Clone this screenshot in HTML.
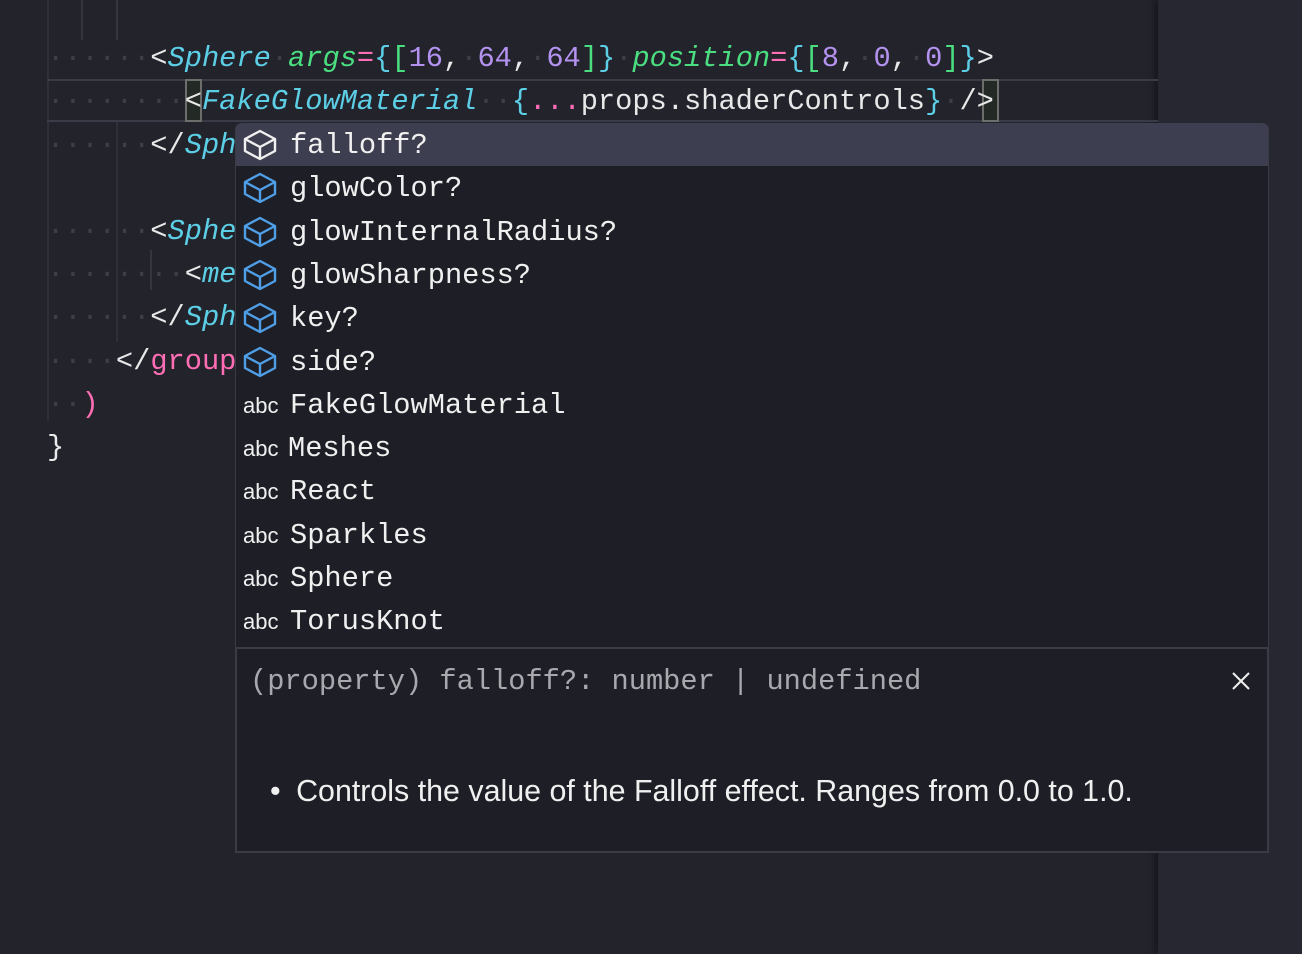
<!DOCTYPE html>
<html><head><meta charset="utf-8"><style>
*{margin:0;padding:0;box-sizing:border-box}
body{width:1302px;height:954px;background:#23232c;position:relative;overflow:hidden;font-family:"Liberation Mono",monospace}
.right{position:absolute;left:1158px;top:0;width:144px;height:954px;background:#262731;box-shadow:-4px 0 6px rgba(0,0,0,.35)}
.guide{position:absolute;top:0;width:2px;background:#34353f}
.ln{position:absolute;left:47px;height:43px;line-height:43px;font-size:28.7px;color:#e8e8e8;white-space:pre}
.d{color:#3d3e48}
.t{color:#5ccfe6;font-style:italic}
.a{color:#4ade80;font-style:italic}
.p{color:#ff6eb4}
.c{color:#5ccfe6}
.g{color:#4ade80}
.n{color:#b392f0}
.cur{position:absolute;left:47px;top:79px;width:1111px;height:43px;border:2px solid #3a3b47;border-left:none;border-right:none}
.cbox{position:absolute;width:17px;height:43px;border:2px solid #6b6e6b;background:#232a26}
.sugg{position:absolute;left:235px;top:123px;width:1034px;height:525px;background:#1e1f26;border:1px solid #3a3b45;border-top:none;border-radius:6px 6px 0 0}
.row{position:absolute;left:0;width:1032px;height:43.3px;line-height:45px;font-size:28.7px;color:#f0f0f0;white-space:pre}
.row svg{position:absolute;left:6px;top:4px}
.row .lbl{position:absolute;left:54px}
.abc{position:absolute;left:7px;font-family:"Liberation Sans",sans-serif;font-size:22px;color:#f0f0f0}
.sel{background:#3d3e4f;border-radius:6px 6px 0 0}
.det{position:absolute;left:235px;top:647px;width:1034px;height:206px;background:#1e1f26;border:2px solid #3a3b45}
</style></head><body>
<div class="right"></div>
<div class="guide" style="left:81px;height:40px"></div>
<div class="guide" style="left:116px;height:40px"></div>
<div class="guide" style="left:47px;height:420px;background:#2e2f39"></div>
<div class="guide" style="left:116px;top:122px;height:220px;background:#2e2f39"></div>
<div class="guide" style="left:150px;top:250px;height:40px;background:#34353f"></div>
<div class="cur"></div>
<div class="cbox" style="left:185px;top:79px"></div>
<div class="cbox" style="left:982px;top:79px"></div>
<div class="ln" style="top:37px"><span class="d">······</span>&lt;<span class="t">Sphere</span><span class="d">·</span><span class="a">args</span><span class="p">=</span><span class="c">{</span><span class="g">[</span><span class="n">16</span>,<span class="d">·</span><span class="n">64</span>,<span class="d">·</span><span class="n">64</span><span class="g">]</span><span class="c">}</span><span class="d">·</span><span class="a">position</span><span class="p">=</span><span class="c">{</span><span class="g">[</span><span class="n">8</span>,<span class="d">·</span><span class="n">0</span>,<span class="d">·</span><span class="n">0</span><span class="g">]</span><span class="c">}</span>&gt;</div>
<div class="ln" style="top:80px"><span class="d">········</span>&lt;<span class="t">FakeGlowMaterial</span><span class="d">··</span><span class="c">{</span><span class="p">...</span>props.shaderControls<span class="c">}</span><span class="d">·</span>/&gt;</div>
<div class="ln" style="top:124px"><span class="d">······</span>&lt;/<span class="t">Sphere</span>&gt;</div>
<div class="ln" style="top:210px"><span class="d">······</span>&lt;<span class="t">Sphere</span></div>
<div class="ln" style="top:253px"><span class="d">········</span>&lt;<span class="t">mesh</span></div>
<div class="ln" style="top:296px"><span class="d">······</span>&lt;/<span class="t">Sphere</span></div>
<div class="ln" style="top:340px"><span class="d">····</span>&lt;/<span class="p">group</span></div>
<div class="ln" style="top:383px"><span class="d">··</span><span class="p">)</span></div>
<div class="ln" style="top:426px">}</div>

<div class="sugg">
<div class="row sel" style="top:0"><svg width="36" height="36" viewBox="0 0 36 36" fill="none" stroke="#f0f0f0" stroke-width="2.4" stroke-linejoin="round"><path d="M3 12 L18 4 L33 12 L33 24 L18 32 L3 24 Z"/><path d="M3 12 L18 20 L33 12 M18 20 L18 32"/></svg><span class="lbl">falloff?</span></div>
<div class="row" style="top:43.3px"><svg width="36" height="36" viewBox="0 0 36 36" fill="none" stroke="#4f9ee8" stroke-width="2.4" stroke-linejoin="round"><path d="M3 12 L18 4 L33 12 L33 24 L18 32 L3 24 Z"/><path d="M3 12 L18 20 L33 12 M18 20 L18 32"/></svg><span class="lbl">glowColor?</span></div>
<div class="row" style="top:86.6px"><svg width="36" height="36" viewBox="0 0 36 36" fill="none" stroke="#4f9ee8" stroke-width="2.4" stroke-linejoin="round"><path d="M3 12 L18 4 L33 12 L33 24 L18 32 L3 24 Z"/><path d="M3 12 L18 20 L33 12 M18 20 L18 32"/></svg><span class="lbl">glowInternalRadius?</span></div>
<div class="row" style="top:129.9px"><svg width="36" height="36" viewBox="0 0 36 36" fill="none" stroke="#4f9ee8" stroke-width="2.4" stroke-linejoin="round"><path d="M3 12 L18 4 L33 12 L33 24 L18 32 L3 24 Z"/><path d="M3 12 L18 20 L33 12 M18 20 L18 32"/></svg><span class="lbl">glowSharpness?</span></div>
<div class="row" style="top:173.2px"><svg width="36" height="36" viewBox="0 0 36 36" fill="none" stroke="#4f9ee8" stroke-width="2.4" stroke-linejoin="round"><path d="M3 12 L18 4 L33 12 L33 24 L18 32 L3 24 Z"/><path d="M3 12 L18 20 L33 12 M18 20 L18 32"/></svg><span class="lbl">key?</span></div>
<div class="row" style="top:216.5px"><svg width="36" height="36" viewBox="0 0 36 36" fill="none" stroke="#4f9ee8" stroke-width="2.4" stroke-linejoin="round"><path d="M3 12 L18 4 L33 12 L33 24 L18 32 L3 24 Z"/><path d="M3 12 L18 20 L33 12 M18 20 L18 32"/></svg><span class="lbl">side?</span></div>
<div class="row" style="top:259.8px"><span class="abc">abc</span><span class="lbl">FakeGlowMaterial</span></div>
<div class="row" style="top:303.1px"><span class="abc">abc</span><span class="lbl" style="left:52px">Meshes</span></div>
<div class="row" style="top:346.4px"><span class="abc">abc</span><span class="lbl">React</span></div>
<div class="row" style="top:389.7px"><span class="abc">abc</span><span class="lbl">Sparkles</span></div>
<div class="row" style="top:433px"><span class="abc">abc</span><span class="lbl">Sphere</span></div>
<div class="row" style="top:476.3px"><span class="abc">abc</span><span class="lbl">TorusKnot</span></div>
</div>

<div class="det">
<div style="position:absolute;left:13px;top:13px;font-size:28.7px;color:#a8a8ae;white-space:pre;line-height:40px">(property) falloff?: number | undefined</div>
<svg style="position:absolute;left:994px;top:22px" width="20" height="20" viewBox="0 0 20 20" stroke="#f0f0f0" stroke-width="2"><path d="M2 2 L18 18 M18 2 L2 18"/></svg>
<div style="position:absolute;left:33px;top:122px;font-family:'Liberation Sans',sans-serif;font-size:30.4px;color:#f0f0f0;white-space:pre;line-height:40px">• <span style="margin-left:7px">Controls the value of the Falloff effect. Ranges from 0.0 to 1.0.</span></div>
</div>
</body></html>
